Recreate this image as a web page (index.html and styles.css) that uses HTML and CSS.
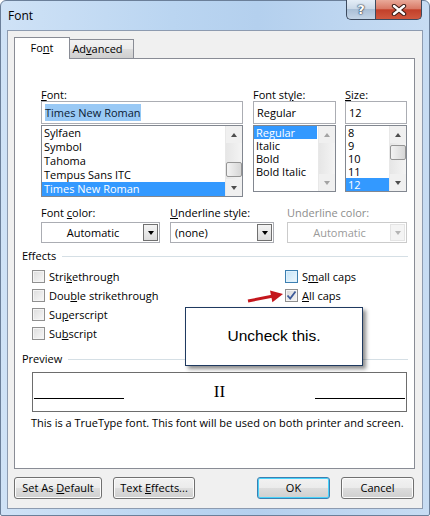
FILE: index.html
```html
<!DOCTYPE html>
<html>
<head>
<meta charset="utf-8">
<link rel="stylesheet" href="styles.css">
</head>
<body>
<div class="window">
  <div class="titlebar">
    <span class="title">Font</span>
    <div class="caption-btns">
      <div class="cbtn help">?</div>
      <div class="cbtn close">
        <svg width="16" height="12" viewBox="0 0 16 12"><path d="M3 2 L13 10 M13 2 L3 10" stroke="#3a1a14" stroke-width="4.4" stroke-linecap="round"/><path d="M3 2 L13 10 M13 2 L3 10" stroke="#fff" stroke-width="2.4" stroke-linecap="round"/></svg>
      </div>
    </div>
  </div>
  <div class="client">
    <div class="tabs">
      <div class="tab active">Fo<u>n</u>t</div>
      <div class="tab">Ad<u>v</u>anced</div>
    </div>
    <div class="panel">
      <div class="fontrow">
        <div class="col c-font">
          <div class="lbl"><u>F</u>ont:</div>
          <div class="tb"><span class="tbsel">Times New Roman</span></div>
          <div class="list l-font">
            <div class="items i14">
              <div class="it">Sylfaen</div>
              <div class="it">Symbol</div>
              <div class="it">Tahoma</div>
              <div class="it">Tempus Sans ITC</div>
              <div class="it sel">Times New Roman</div>
            </div>
            <div class="sb">
              <div class="arr up"></div>
              <div class="track"><div class="thumb t-font"></div></div>
              <div class="arr down"></div>
            </div>
          </div>
        </div>
        <div class="col c-style">
          <div class="lbl">Font st<u>y</u>le:</div>
          <div class="tb">Regular</div>
          <div class="list l-small">
            <div class="items i13">
              <div class="it sel short">Regular</div>
              <div class="it">Italic</div>
              <div class="it">Bold</div>
              <div class="it">Bold Italic</div>
            </div>
            <div class="sb dis">
              <div class="arr up"></div>
              <div class="track"></div>
              <div class="arr down"></div>
            </div>
          </div>
        </div>
        <div class="col c-size">
          <div class="lbl"><u>S</u>ize:</div>
          <div class="tb">12</div>
          <div class="list l-small">
            <div class="items i13">
              <div class="it">8</div>
              <div class="it">9</div>
              <div class="it">10</div>
              <div class="it">11</div>
              <div class="it sel">12</div>
            </div>
            <div class="sb">
              <div class="arr up"></div>
              <div class="track"><div class="thumb t-size"></div></div>
              <div class="arr down"></div>
            </div>
          </div>
        </div>
      </div>

      <div class="ddrow">
        <div class="dd d-color">
          <div class="lbl">Font <u>c</u>olor:</div>
          <div class="combo center"><span class="cval">Automatic</span><span class="cbtnarr"></span></div>
        </div>
        <div class="dd d-ustyle">
          <div class="lbl"><u>U</u>nderline style:</div>
          <div class="combo"><span class="cval">(none)</span><span class="cbtnarr"></span></div>
        </div>
        <div class="dd d-ucolor disabled">
          <div class="lbl">Underline color:</div>
          <div class="combo center"><span class="cval">Automatic</span><span class="cbtnarr"></span></div>
        </div>
      </div>

      <div class="group g-effects"><span>Effects</span><i></i></div>
      <div class="effects">
        <div class="ecol ecol1">
          <div class="cb"><span class="box"></span>Stri<u>k</u>ethrough</div>
          <div class="cb"><span class="box"></span>Dou<u>b</u>le strikethrough</div>
          <div class="cb"><span class="box"></span>Su<u>p</u>erscript</div>
          <div class="cb"><span class="box"></span>Su<u>b</u>script</div>
        </div>
        <div class="ecol ecol2">
          <div class="cb"><span class="box hover"></span>S<u>m</u>all caps</div>
          <div class="cb"><span class="box checked"><svg width="11" height="11" viewBox="0 0 11 11"><path d="M1.5 5.5 L4.2 8.5 L9.5 1.5" fill="none" stroke="#3d5a99" stroke-width="1.8"/></svg></span><u>A</u>ll caps</div>
        </div>
      </div>

      <div class="group g-preview"><span>Preview</span><i></i></div>
      <div class="preview">
        <div class="pline"></div>
        <div class="ptext">II</div>
        <div class="pline"></div>
      </div>
      <div class="desc">This is a TrueType font. This font will be used on both printer and screen.</div>
    </div>
    <div class="buttons">
      <div class="btn b-default">Set As <u>D</u>efault</div>
      <div class="btn b-effects">Text <u>E</u>ffects...</div>
      <div class="spacer"></div>
      <div class="btn b-ok">OK</div>
      <div class="btn b-cancel">Cancel</div>
    </div>
  </div>

  <svg class="arrow" width="42" height="18" viewBox="0 0 42 18">
    <path d="M3 14 L27 9.3" stroke="#c4161c" stroke-width="3" fill="none"/>
    <polygon points="38,7 27.4,15.2 25,3.4" fill="#c4161c"/>
  </svg>
  <div class="callout">Uncheck this.</div>
</div>
</body>
</html>
```

FILE: styles.css
```css
* { box-sizing: border-box; }
html, body { margin: 0; padding: 0; }
body {
  width: 430px;
  height: 516px;
  overflow: hidden;
  font-family: "Open Sans", "Noto Sans", sans-serif;
  font-size: 11px;
  color: #000;
  background: #fff;
}
u { text-decoration: underline; text-underline-offset: 1px; }

.window {
  position: relative;
  width: 430px;
  height: 516px;
  border: 1px solid #6b7f99;
  border-radius: 6px 6px 2px 2px;
  background: linear-gradient(90deg, #cfe2f6 0%, #bad5f1 40%, #b4d0ee 60%, #c7dcf3 100%);
  display: flex;
  flex-direction: column;
}
.titlebar {
  height: 29px;
  display: flex;
  align-items: flex-start;
  padding-left: 7px;
}
.title {
  font-size: 12px;
  line-height: 29px;
  color: #000;
}
.caption-btns {
  margin-left: auto;
  margin-right: 7px;
  margin-top: -1px;
  display: flex;
}
.cbtn {
  height: 20px;
  border: 1px solid #3c4a5e;
  border-top: none;
  display: flex;
  align-items: center;
  justify-content: center;
}
.help {
  width: 29px;
  border-right: none;
  border-radius: 0 0 0 5px;
  background: linear-gradient(180deg, #e4edf7 0%, #cbd9e8 45%, #aabfd6 50%, #c4d5e7 100%);
  color: #fff;
  font-family: "DejaVu Sans", sans-serif;
  font-weight: bold;
  font-size: 13px;
  text-shadow: 0 0 1px #2a3a50, 0 0 1px #2a3a50, 0 0 2px #2a3a50;
}
.close {
  width: 47px;
  border-radius: 0 0 5px 0;
  background: linear-gradient(180deg, #e9a999 0%, #d97a67 45%, #c2402a 52%, #d0583f 100%);
}

.client {
  margin: 0 6px 6px 6px;
  flex: 1;
  background: #f0f0f0;
  border: 1px solid #8d9bb0;
  padding: 6px 0 0 6px;
}

.tabs {
  display: flex;
  align-items: flex-end;
  height: 21px;
  position: relative;
  z-index: 2;
}
.tab {
  height: 19px;
  border: 1px solid #898c95;
  border-bottom: none;
  background: linear-gradient(180deg, #f2f2f2 0%, #ebebeb 50%, #dddddd 51%, #cfcfcf 100%);
  padding: 0 8px;
  line-height: 18px;
}
.tab.active {
  height: 22px;
  margin-bottom: -1px;
  width: 56px;
  background: #fff;
  text-align: center;
  padding: 0;
  line-height: 20px;
}
.tab + .tab { border-left: none; width: 64px; padding-left: 0; text-align: center; }

.panel {
  width: 401px;
  height: 411px;
  background: #fff;
  border: 1px solid #898c95;
  position: relative;
}

.lbl { line-height: 13px; height: 13px; white-space: nowrap; }

.fontrow {
  display: flex;
  align-items: flex-start;
  margin-top: 29px;
  margin-left: 26px;
}
.col { display: flex; flex-direction: column; }
.c-font { width: 202px; }
.c-style { width: 83px; margin-left: 10px; }
.c-size { width: 62px; margin-left: 9px; }

.tb {
  margin-top: 0;
  height: 23px;
  border: 1px solid #abadb3;
  padding: 0 3px;
  line-height: 21px;
  white-space: nowrap;
}
.tbsel { background: #99c9f5; color: #0b1a33; padding: 1px 0; }

.list {
  margin-top: 1px;
  border: 1px solid #828790;
  display: flex;
}
.l-font { height: 72px; }
.l-small { height: 67px; }
.items { flex: 1; min-width: 0; overflow: hidden; }
.it { padding-left: 2px; white-space: nowrap; overflow: hidden; }
.i14 .it { height: 14px; line-height: 14px; }
.i13 .it { height: 13px; line-height: 13px; }
.it.sel { background: #3399ff; color: #fff; }
.it.short { margin-right: 1px; }

.sb {
  width: 17px;
  flex: none;
  display: flex;
  flex-direction: column;
  background: #f0f0f0;
  border-left: 1px solid #e8e8e8;
}
.sb .track { flex: 1; position: relative; background: linear-gradient(90deg, #e6e6e6, #f4f4f4); }
.arr {
  height: 17px;
  display: flex;
  align-items: center;
  justify-content: center;
}
.arr::before {
  content: "";
  width: 0; height: 0;
  border-left: 3.5px solid transparent;
  border-right: 3.5px solid transparent;
}
.arr.up::before { border-bottom: 4px solid #4d4d4d; }
.arr.down::before { border-top: 4px solid #4d4d4d; }
.sb.dis .arr.up::before { border-bottom-color: #a3a3a3; }
.sb.dis .arr.down::before { border-top-color: #a3a3a3; }
.thumb {
  position: absolute;
  left: 0; right: 0;
  height: 15px;
  border: 1px solid #959595;
  border-radius: 2px;
  background: linear-gradient(90deg, #f3f3f3, #e2e2e2 60%, #d6d6d6);
}
.t-font { top: 19px; }
.t-size { top: 2px; }

.ddrow {
  display: flex;
  margin-top: 9px;
  margin-left: 26px;
}
.dd { display: flex; flex-direction: column; }
.d-color { width: 119px; }
.d-ustyle { width: 104px; margin-left: 10px; }
.d-ucolor { width: 120px; margin-left: 13px; }
.combo {
  margin-top: 3px;
  height: 21px;
  border: 1px solid #abadb3;
  display: flex;
  align-items: stretch;
  padding: 1px;
}
.cval { flex: 1; line-height: 17px; padding-left: 3px; }
.combo.center .cval { text-align: center; padding-left: 0; }
.cbtnarr {
  width: 15px;
  border: 1px solid #707070;
  background: linear-gradient(180deg, #f4f4f4, #dcdcdc);
  display: flex;
  align-items: center;
  justify-content: center;
}
.cbtnarr::before {
  content: "";
  border-left: 3.5px solid transparent;
  border-right: 3.5px solid transparent;
  border-top: 4px solid #000;
}
.disabled .lbl { color: #8d8d8d; }
.disabled .combo { border-color: #cbcbcb; }
.disabled .cval { color: #9a9a9a; }
.disabled .cbtnarr { border-color: #e4e4e4; background: #f4f4f4; }
.disabled .cbtnarr::before { border-top-color: #b5b5b5; }

.group {
  display: flex;
  align-items: center;
  margin-left: 7px;
  margin-right: 6px;
  height: 14px;
  line-height: 14px;
}
.group i { flex: 1; height: 1px; background: #d5dfe5; margin-left: 6px; }
.g-effects { margin-top: 6px; }
.g-preview { margin-top: 9px; }

.effects {
  display: flex;
  margin-top: 4px;
}
.ecol { display: flex; flex-direction: column; }
.ecol1 { margin-left: 17px; width: 253px; }
.cb {
  height: 19px;
  display: flex;
  align-items: center;
  white-space: nowrap;
}
.box {
  width: 13px;
  height: 13px;
  border: 1px solid #8f8f8f;
  margin-right: 4px;
  background: linear-gradient(135deg, #dcdcdc, #f8f8f8);
  box-shadow: inset 0 0 0 1px #f4f4f4;
  display: flex;
  align-items: center;
  justify-content: center;
}
.box.hover {
  border-color: #3c7fb1;
  background: linear-gradient(135deg, #c5e4f8, #edf7fd);
  box-shadow: inset 0 0 0 1px #dff1fc;
}
.box.checked { background: linear-gradient(135deg, #d8d8d8, #f4f4f4); }

.preview {
  margin: 6px 0 0 17px;
  width: 375px;
  height: 40px;
  border: 1px solid #6d6d6d;
  display: flex;
  align-items: flex-start;
  padding: 0 1px;
}
.pline { width: 90px; height: 1px; background: #000; margin-top: 25px; }
.ptext {
  flex: 1;
  text-align: center;
  font-family: "Liberation Serif", serif;
  font-size: 17px;
  line-height: 17px;
  margin-top: 10px;
}
.desc {
  margin: 4px 0 0 16px;
  line-height: 14px;
  white-space: nowrap;
}

.buttons {
  display: flex;
  margin-top: 8px;
  width: 400px;
}
.btn {
  height: 22px;
  border: 1px solid #707070;
  border-radius: 3px;
  background: linear-gradient(180deg, #f2f2f2 0%, #ebebeb 50%, #dddddd 51%, #cfcfcf 100%);
  box-shadow: inset 0 0 0 1px #fcfcfc;
  text-align: center;
  line-height: 20px;
  white-space: nowrap;
}
.b-default { width: 88px; }
.b-effects { width: 82px; margin-left: 11px; }
.spacer { flex: 1; }
.b-ok {
  width: 73px;
  border-color: #3c7fb1;
  box-shadow: inset 0 0 0 1px #48d2fa;
}
.b-cancel { width: 73px; margin-left: 11px; }

.arrow {
  position: absolute;
  left: 244px;
  top: 286px;
}
.callout {
  position: absolute;
  left: 184px;
  top: 306px;
  width: 178px;
  height: 59px;
  background: #fff;
  border: 1px solid #1f3a60;
  box-shadow: 3px 3px 4px rgba(0,0,0,0.45);
  font-family: "Liberation Sans", Arial, sans-serif;
  font-size: 15.5px;
  display: flex;
  align-items: center;
  justify-content: center;
  padding-bottom: 1px;
}
```
